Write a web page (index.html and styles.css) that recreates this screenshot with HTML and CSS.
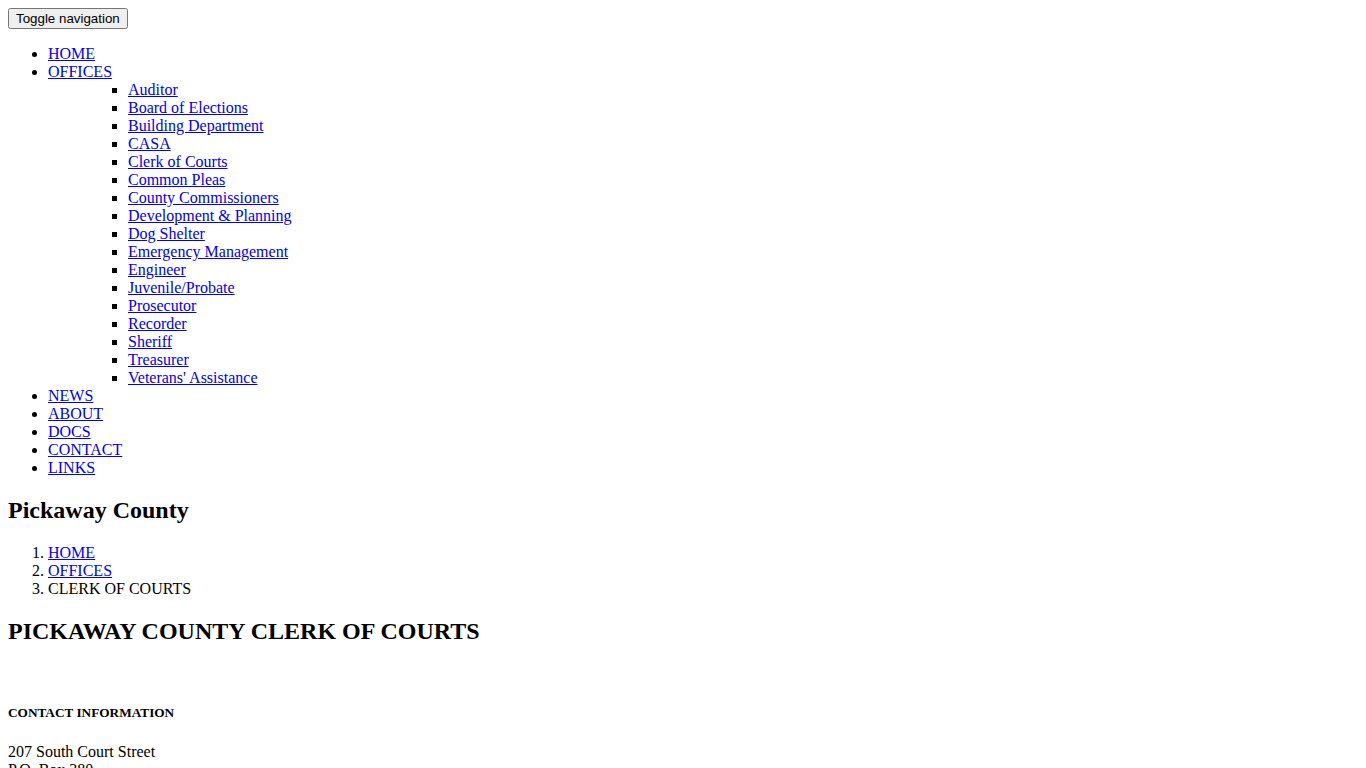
FILE: index.html
```html
<!DOCTYPE html>
<html lang="en">
<head>
<meta charset="utf-8">
<title>Pickaway County Clerk of Courts</title>
<link rel="stylesheet" href="styles.css">
</head>
<body>
<nav class="navbar">
  <button type="button" class="navbar-toggle">Toggle navigation</button>
  <ul class="nav">
    <li><a href="#">HOME</a></li>
    <li><a href="#">OFFICES</a>
      <ul class="dropdown">
        <li class="dropdown-col">
          <ul>
            <li><a href="#">Auditor</a></li>
            <li><a href="#">Board of Elections</a></li>
            <li><a href="#">Building Department</a></li>
            <li><a href="#">CASA</a></li>
            <li><a href="#">Clerk of Courts</a></li>
            <li><a href="#">Common Pleas</a></li>
            <li><a href="#">County Commissioners</a></li>
            <li><a href="#">Development &amp; Planning</a></li>
            <li><a href="#">Dog Shelter</a></li>
            <li><a href="#">Emergency Management</a></li>
            <li><a href="#">Engineer</a></li>
            <li><a href="#">Juvenile/Probate</a></li>
            <li><a href="#">Prosecutor</a></li>
            <li><a href="#">Recorder</a></li>
            <li><a href="#">Sheriff</a></li>
            <li><a href="#">Treasurer</a></li>
            <li><a href="#">Veterans' Assistance</a></li>
          </ul>
        </li>
      </ul>
    </li>
    <li><a href="#">NEWS</a></li>
    <li><a href="#">ABOUT</a></li>
    <li><a href="#">DOCS</a></li>
    <li><a href="#">CONTACT</a></li>
    <li><a href="#">LINKS</a></li>
  </ul>
</nav>
<h2>Pickaway County</h2>
<ol class="breadcrumb">
  <li><a href="#">HOME</a></li>
  <li><a href="#">OFFICES</a></li>
  <li>CLERK OF COURTS</li>
</ol>
<h2>PICKAWAY COUNTY CLERK OF COURTS</h2>
<p>&nbsp;</p>
<h5>CONTACT INFORMATION</h5>
<p>207 South Court Street<br>P.O. Box 380<br>Circleville, Ohio 43113</p>
</body>
</html>
```
FILE: styles.css
```css
body {
  font-family: "Liberation Serif", "Times New Roman", serif;
  color: #000;
  background: #fff;
}
.navbar-toggle {
  font-family: "Liberation Sans", Arial, sans-serif;
  font-size: 13.333px;
}
.dropdown {
  list-style: none;
}
.dropdown-col {
  list-style: none;
}
.dropdown-col ul {
  list-style: square;
}
a {
  color: #0000ee;
}
```
